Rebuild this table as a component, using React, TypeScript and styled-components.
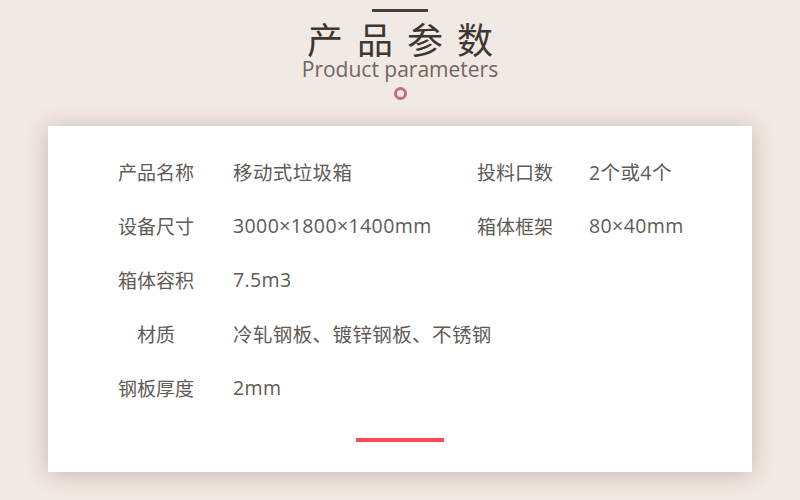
import styled, { createGlobalStyle } from 'styled-components'

const GlobalStyle = createGlobalStyle`
  html, body {
    margin: 0;
    padding: 0;
    background: #f1e9e3;
  }
  body {
    font-family: "Noto Sans CJK SC", "Open Sans", sans-serif;
  }
`

const Page = styled.div`
  width: 800px;
  height: 500px;
  overflow: hidden;
  display: flex;
  flex-direction: column;
  align-items: center;
  padding-top: 9px;
  box-sizing: border-box;
`

const TopBar = styled.div`
  width: 56px;
  height: 3px;
  background: #4a3f38;
`

const Title = styled.h1`
  margin: 8px 0 0 14px;
  font-size: 36px;
  font-weight: 400;
  line-height: 36px;
  letter-spacing: 14px;
  color: #3c3733;
`

const Subtitle = styled.div`
  margin-top: 1px;
  font-family: "Open Sans", "Noto Sans", sans-serif;
  font-size: 21px;
  line-height: 24px;
  color: #6e6762;
`

const Dot = styled.div`
  margin-top: 6px;
  width: 7px;
  height: 7px;
  border: 3px solid #c26f77;
  border-radius: 50%;
`

const Card = styled.div`
  margin-top: 26px;
  width: 704px;
  height: 346px;
  box-sizing: border-box;
  background: #fff;
  box-shadow: 0 2px 22px rgba(110, 85, 65, 0.32);
  padding: 18px 0 0 69px;
  display: flex;
  flex-direction: column;
`

const Row = styled.div`
  display: grid;
  grid-template-columns: 116px 243px 113px 1fr;
  align-items: center;
  height: 54px;
  font-size: 19px;
  color: #615a55;
`

const Label = styled.span`
  width: 78px;
  text-align: center;
  white-space: nowrap;
`

const Value = styled.span`
  white-space: nowrap;
  font-family: "Open Sans", "Noto Sans CJK SC", sans-serif;
  font-size: 19.5px;
  letter-spacing: 0.4px;
`

const Accent = styled.div`
  margin: 24px 0 0 239px;
  width: 88px;
  height: 4px;
  background: #ff4a50;
`

type Spec = { label: string; value: string }

const rows: Spec[][] = [
  [{ label: '产品名称', value: '移动式垃圾箱' }, { label: '投料口数', value: '2个或4个' }],
  [{ label: '设备尺寸', value: '3000×1800×1400mm' }, { label: '箱体框架', value: '80×40mm' }],
  [{ label: '箱体容积', value: '7.5m3' }],
  [{ label: '材质', value: '冷轧钢板、镀锌钢板、不锈钢' }],
  [{ label: '钢板厚度', value: '2mm' }],
]

const App = () => (
  <>
    <GlobalStyle />
    <Page>
      <TopBar />
      <Title>产品参数</Title>
      <Subtitle>Product parameters</Subtitle>
      <Dot />
      <Card>
        {rows.map((row, i) => (
          <Row key={i}>
            {row.map(spec => [
              <Label key={spec.label}>{spec.label}</Label>,
              <Value key={spec.label + 'v'}>{spec.value}</Value>,
            ])}
          </Row>
        ))}
        <Accent />
      </Card>
    </Page>
  </>
)

export default App
